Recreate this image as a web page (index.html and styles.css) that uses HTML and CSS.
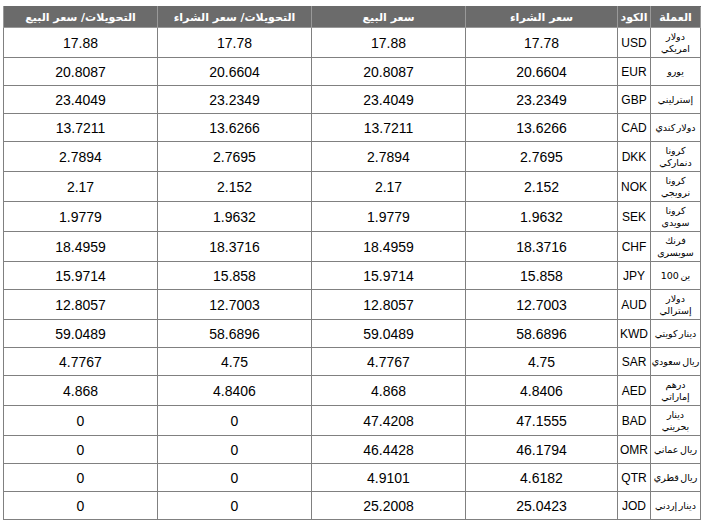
FILE: index.html
```html
<!DOCTYPE html>
<html lang="ar" dir="rtl">
<head>
<meta charset="utf-8">
<title>أسعار العملات</title>
<link rel="stylesheet" href="styles.css">
</head>
<body>
<table class="rates">
<colgroup>
<col class="c-name"><col class="c-code"><col class="c-buy"><col class="c-num"><col class="c-num"><col class="c-num">
</colgroup>
<thead>
<tr><th>العملة</th><th>الكود</th><th>سعر الشراء</th><th>سعر البيع</th><th>التحويلات/ سعر الشراء</th><th>التحويلات/ سعر البيع</th></tr>
</thead>
<tbody>
<tr class="two"><td class="name">دولار<br>امريكي</td><td class="code">USD</td><td class="num">17.78</td><td class="num">17.88</td><td class="num">17.78</td><td class="num">17.88</td></tr>
<tr class="one"><td class="name">يورو</td><td class="code">EUR</td><td class="num">20.6604</td><td class="num">20.8087</td><td class="num">20.6604</td><td class="num">20.8087</td></tr>
<tr class="one"><td class="name">إسترليني</td><td class="code">GBP</td><td class="num">23.2349</td><td class="num">23.4049</td><td class="num">23.2349</td><td class="num">23.4049</td></tr>
<tr class="one"><td class="name">دولار كندي</td><td class="code">CAD</td><td class="num">13.6266</td><td class="num">13.7211</td><td class="num">13.6266</td><td class="num">13.7211</td></tr>
<tr class="two"><td class="name">كرونا<br>دنماركي</td><td class="code">DKK</td><td class="num">2.7695</td><td class="num">2.7894</td><td class="num">2.7695</td><td class="num">2.7894</td></tr>
<tr class="two"><td class="name">كرونا<br>نرويجي</td><td class="code">NOK</td><td class="num">2.152</td><td class="num">2.17</td><td class="num">2.152</td><td class="num">2.17</td></tr>
<tr class="two"><td class="name">كرونا<br>سويدى</td><td class="code">SEK</td><td class="num">1.9632</td><td class="num">1.9779</td><td class="num">1.9632</td><td class="num">1.9779</td></tr>
<tr class="two"><td class="name">فرنك<br>سويسرى</td><td class="code">CHF</td><td class="num">18.3716</td><td class="num">18.4959</td><td class="num">18.3716</td><td class="num">18.4959</td></tr>
<tr class="one"><td class="name">ين 100</td><td class="code">JPY</td><td class="num">15.858</td><td class="num">15.9714</td><td class="num">15.858</td><td class="num">15.9714</td></tr>
<tr class="two"><td class="name">دولار<br>إسترالي</td><td class="code">AUD</td><td class="num">12.7003</td><td class="num">12.8057</td><td class="num">12.7003</td><td class="num">12.8057</td></tr>
<tr class="one"><td class="name">دينار كويتي</td><td class="code">KWD</td><td class="num">58.6896</td><td class="num">59.0489</td><td class="num">58.6896</td><td class="num">59.0489</td></tr>
<tr class="one"><td class="name">ريال سعودي</td><td class="code">SAR</td><td class="num">4.75</td><td class="num">4.7767</td><td class="num">4.75</td><td class="num">4.7767</td></tr>
<tr class="two"><td class="name">درهم<br>إماراتي</td><td class="code">AED</td><td class="num">4.8406</td><td class="num">4.868</td><td class="num">4.8406</td><td class="num">4.868</td></tr>
<tr class="two"><td class="name">دينار<br>بحريني</td><td class="code">BAD</td><td class="num">47.1555</td><td class="num">47.4208</td><td class="num">0</td><td class="num">0</td></tr>
<tr class="one"><td class="name">ريال عماني</td><td class="code">OMR</td><td class="num">46.1794</td><td class="num">46.4428</td><td class="num">0</td><td class="num">0</td></tr>
<tr class="one"><td class="name">ريال قطري</td><td class="code">QTR</td><td class="num">4.6182</td><td class="num">4.9101</td><td class="num">0</td><td class="num">0</td></tr>
<tr class="one"><td class="name">دينار إردني</td><td class="code">JOD</td><td class="num">25.0423</td><td class="num">25.2008</td><td class="num">0</td><td class="num">0</td></tr>
</tbody>
</table>
</body>
</html>
```
FILE: styles.css
```css
html, body {
  margin: 0;
  padding: 0;
  background: #ffffff;
}
body {
  padding: 6px 1px 0 3px;
  font-family: "Liberation Sans", "DejaVu Sans", sans-serif;
  color: #000000;
}
.rates {
  border-collapse: collapse;
  table-layout: fixed;
  width: 698px;
}
.c-name { width: 50px; }
.c-code { width: 33px; }
.c-buy { width: 152px; }
.c-num { width: 154px; }
.rates th {
  background: #6b6b6b;
  color: #ffffff;
  font-family: "DejaVu Sans", sans-serif;
  font-weight: bold;
  font-size: 11px;
  height: 20px;
  padding: 0;
  text-align: center;
  border: 1px solid #999999;
  border-top-color: #6b6b6b;
  white-space: nowrap;
}
.rates td {
  border: 1px solid #808080;
  padding: 0;
  text-align: center;
  vertical-align: middle;
}
.rates tr.one td { height: 27px; }
.rates tr.two td { height: 29px; }
.num {
  font-size: 14px;
  direction: ltr;
}
.code {
  font-size: 12px;
}
.name {
  font-family: "DejaVu Sans", sans-serif;
  font-size: 9.5px;
  line-height: 12px;
  word-spacing: -1.5px;
  white-space: nowrap;
  overflow: hidden;
}
```
